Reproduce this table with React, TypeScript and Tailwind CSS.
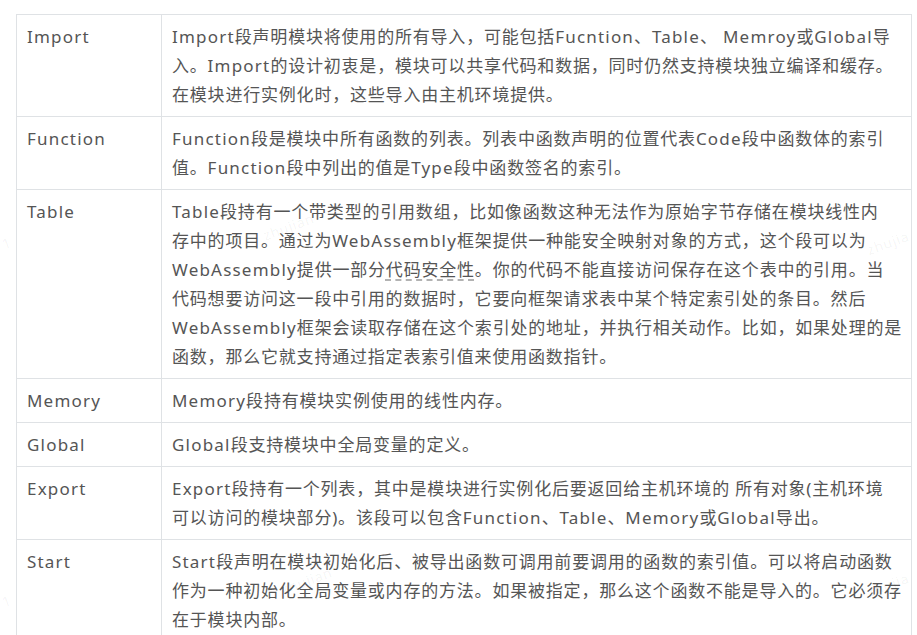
type Part = string | { u: string };

interface Row {
  name: string;
  lines: Part[][];
}

const rows: Row[] = [
  {
    name: "Import",
    lines: [
      ["Import段声明模块将使用的所有导入，可能包括Fucntion、Table、 Memroy或Global导"],
      ["入。Import的设计初衷是，模块可以共享代码和数据，同时仍然支持模块独立编译和缓存。"],
      ["在模块进行实例化时，这些导入由主机环境提供。"],
    ],
  },
  {
    name: "Function",
    lines: [
      ["Function段是模块中所有函数的列表。列表中函数声明的位置代表Code段中函数体的索引"],
      ["值。Function段中列出的值是Type段中函数签名的索引。"],
    ],
  },
  {
    name: "Table",
    lines: [
      ["Table段持有一个带类型的引用数组，比如像函数这种无法作为原始字节存储在模块线性内"],
      ["存中的项目。通过为WebAssembly框架提供一种能安全映射对象的方式，这个段可以为"],
      ["WebAssembly提供一部分", { u: "代码安全性" }, "。你的代码不能直接访问保存在这个表中的引用。当"],
      ["代码想要访问这一段中引用的数据时，它要向框架请求表中某个特定索引处的条目。然后"],
      ["WebAssembly框架会读取存储在这个索引处的地址，并执行相关动作。比如，如果处理的是"],
      ["函数，那么它就支持通过指定表索引值来使用函数指针。"],
    ],
  },
  {
    name: "Memory",
    lines: [["Memory段持有模块实例使用的线性内存。"]],
  },
  {
    name: "Global",
    lines: [["Global段支持模块中全局变量的定义。"]],
  },
  {
    name: "Export",
    lines: [
      ["Export段持有一个列表，其中是模块进行实例化后要返回给主机环境的 所有对象(主机环境"],
      ["可以访问的模块部分)。该段可以包含Function、Table、Memory或Global导出。"],
    ],
  },
  {
    name: "Start",
    lines: [
      ["Start段声明在模块初始化后、被导出函数可调用前要调用的函数的索引值。可以将启动函数"],
      ["作为一种初始化全局变量或内存的方法。如果被指定，那么这个函数不能是导入的。它必须存"],
      ["在于模块内部。"],
    ],
  },
];

const marks = [
  { text: "zhujian", cls: "left-[262px] top-[212px]" },
  { text: "zhujia", cls: "left-[866px] top-[228px]" },
  { text: "1", cls: "left-[2px] top-[228px]" },
  { text: "zhujian", cls: "left-[280px] top-[566px]" },
  { text: "zhujia", cls: "left-[866px] top-[570px]" },
  { text: "1", cls: "left-[2px] top-[586px]" },
];

// latin words are set a bit wider than the cjk runs
function Mixed({ text }: { text: string }) {
  return (
    <>
      {text.split(/([A-Za-z]+)/).map((s, i) =>
        /^[A-Za-z]+$/.test(s) ? (
          <span key={i} className="tracking-[1.2px]">
            {s}
          </span>
        ) : (
          <span key={i}>{s}</span>
        )
      )}
    </>
  );
}

export default function App() {
  return (
    <div
      className="relative h-[635px] w-[917px] overflow-hidden bg-white pl-4 pt-[14px] text-[17px] leading-[29px] tracking-[0.8px] text-[#555]"
      style={{ fontFamily: '"Noto Sans", "Noto Sans CJK SC", sans-serif' }}
    >
      <table className="w-[896px] table-fixed border-collapse">
        <colgroup>
          <col className="w-[145px]" />
          <col />
        </colgroup>
        <tbody>
          {rows.map((row) => (
            <tr key={row.name}>
              <td className="border border-[#dfe2e5] px-[10px] py-[7px] align-top">
                <Mixed text={row.name} />
              </td>
              <td className="border border-[#dfe2e5] px-[10px] py-[7px] align-top">
                {row.lines.map((line, i) => (
                  <div key={i} className="whitespace-pre">
                    {line.map((p, j) =>
                      typeof p === "string" ? (
                        <Mixed key={j} text={p} />
                      ) : (
                        <span
                          key={j}
                          className="underline decoration-dashed decoration-[#999] underline-offset-4"
                        >
                          {p.u}
                        </span>
                      )
                    )}
                  </div>
                ))}
              </td>
            </tr>
          ))}
        </tbody>
      </table>

      {marks.map((m, i) => (
        <span
          key={i}
          className={`pointer-events-none absolute -rotate-[20deg] text-[14px] text-black/[0.05] ${m.cls}`}
        >
          {m.text}
        </span>
      ))}
    </div>
  );
}
